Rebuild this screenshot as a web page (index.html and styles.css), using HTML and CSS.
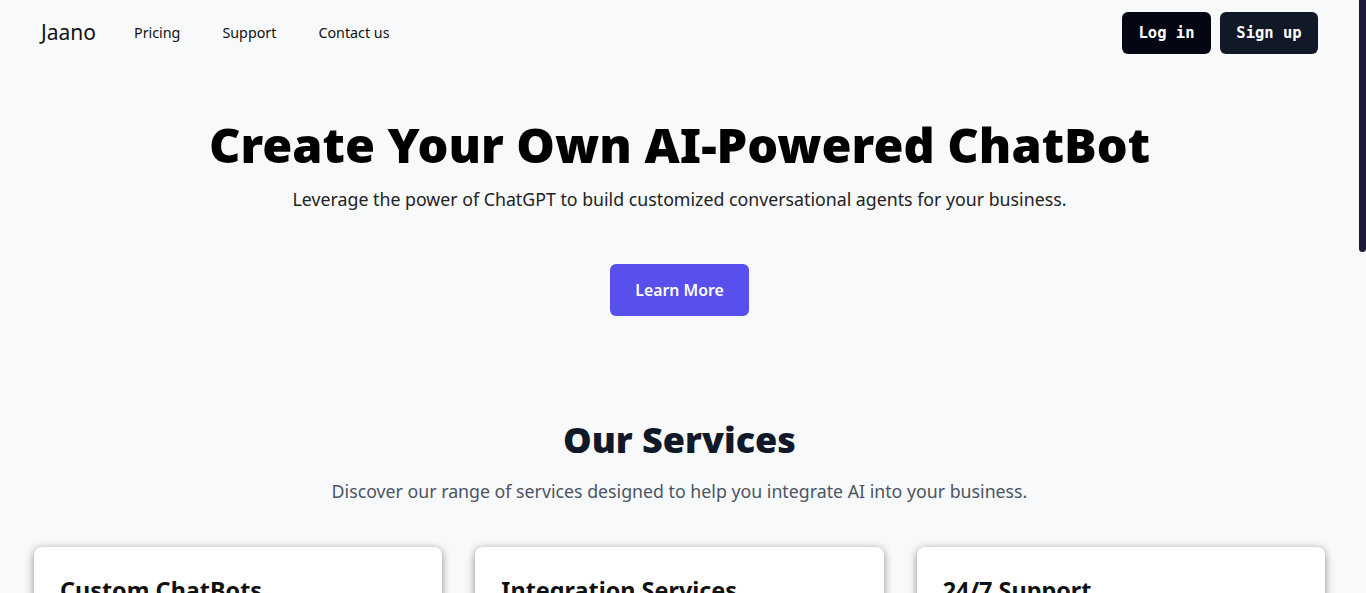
FILE: index.html
```html
<!DOCTYPE html>
<html lang="en">
<head>
<meta charset="utf-8">
<title>Jaano</title>
<link rel="stylesheet" href="styles.css">
</head>
<body>
<div class="scroll-thumb"></div>
<header class="nav">
  <div class="nav-left">
    <a class="brand" href="#">Jaano</a>
    <a class="nav-link" href="#">Pricing</a>
    <a class="nav-link" href="#">Support</a>
    <a class="nav-link" href="#">Contact us</a>
  </div>
  <div class="nav-right">
    <a class="btn-dark btn-login" href="#">Log in</a>
    <a class="btn-dark btn-signup" href="#">Sign up</a>
  </div>
</header>
<section class="hero">
  <h1>Create Your Own AI-Powered ChatBot</h1>
  <p class="lead">Leverage the power of ChatGPT to build customized conversational agents for your business.</p>
  <a class="btn-primary" href="#">Learn More</a>
</section>
<section class="services">
  <h2>Our Services</h2>
  <p class="sub">Discover our range of services designed to help you integrate AI into your business.</p>
  <div class="cards">
    <div class="card">
      <h3>Custom ChatBots</h3>
      <p>Build chatbots tailored to your business needs, trained on your own data and documents.</p>
    </div>
    <div class="card">
      <h3>Integration Services</h3>
      <p>Connect your chatbot to your website, apps and the tools your team already uses.</p>
    </div>
    <div class="card">
      <h3>24/7 Support</h3>
      <p>Our team is always available to help you keep your conversational agents running smoothly.</p>
    </div>
  </div>
</section>
<footer class="footer">
  <p>© 2023 Jaano. All rights reserved.</p>
</footer>
</body>
</html>
```
FILE: styles.css
```css
html { background: #f8f9fb; scrollbar-width: none; }
html::-webkit-scrollbar { display: none; }
body {
  margin: 0 7px 0 0;
  font-family: "Noto Sans", "Open Sans", sans-serif;
  color: #111;
  background: #f8f9fb;
}
.scroll-thumb {
  position: fixed;
  top: 0;
  right: 0;
  width: 7px;
  height: 252px;
  background: #1e1b3a;
  border-radius: 0 0 4px 4px;
}
a { text-decoration: none; color: inherit; }
.nav {
  display: flex;
  justify-content: space-between;
  align-items: center;
  padding: 12px 41px 0 41px;
  height: 42px;
}
.nav-left { display: flex; align-items: center; padding-bottom: 2px; }
.brand { font-size: 21px; color: #111; margin-right: 38px; }
.nav-link { font-size: 14.3px; color: #111; margin-right: 42px; }
.nav-right { display: flex; gap: 9px; }
.btn-dark {
  display: flex; align-items: center; justify-content: center;
  height: 42px;
  border-radius: 6px;
  color: #fff;
  font-family: "DejaVu Sans Mono", "Liberation Mono", monospace;
  font-weight: bold;
  font-size: 15.5px;
}
.btn-login { width: 89px; background: #030712; }
.btn-signup { width: 98px; background: #111827; }
.hero { text-align: center; padding-top: 60px; }
.hero h1 {
  margin: 0;
  font-size: 48.6px;
  font-weight: 900;
  line-height: 60px;
  color: #000;
}
.lead { margin: 12px 0 0; font-size: 17.75px; color: #222; line-height: 26px; }
.btn-primary {
  display: inline-flex; align-items: center; justify-content: center;
  margin-top: 52px;
  width: 139px; height: 52px;
  background: #5850ec;
  color: #fff;
  border-radius: 6px;
  font-size: 15.8px;
  font-weight: 600;
}
.services { text-align: center; padding-top: 100px; }
.services h2 {
  margin: 0;
  font-size: 36px;
  font-weight: 900;
  line-height: 48px;
  color: #111827;
}
.sub { margin: 14px 0 0; font-size: 17.75px; color: #4b5563; line-height: 26px; }
.cards {
  display: grid;
  grid-template-columns: repeat(3, 1fr);
  gap: 33px;
  padding: 0 34px;
  margin-top: 43px;
  text-align: left;
}
.card {
  background: #fff;
  border-radius: 8px;
  box-shadow: 0 2px 8px rgba(0,0,0,0.45);
  padding: 26px 26px 40px;
  min-height: 300px;
}
.card h3 { margin: 0; font-size: 23.4px; font-weight: 700; color: #111; line-height: 34px; }
.card p { font-size: 16px; color: #4b5563; line-height: 24px; }
.footer { text-align: center; padding: 180px 0 160px; color: #6b7280; font-size: 14px; }
```
